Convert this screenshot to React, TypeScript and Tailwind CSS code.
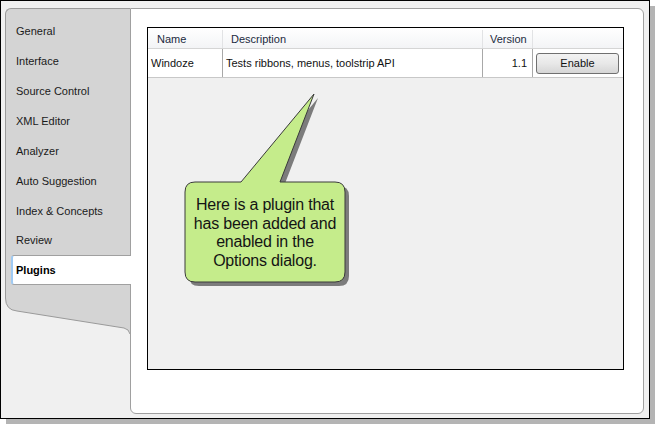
import React from "react";

const tabs = [
  { label: "General", h: "h-[30px]" },
  { label: "Interface", h: "h-[30px]" },
  { label: "Source Control", h: "h-[30px]" },
  { label: "XML Editor", h: "h-[30px]" },
  { label: "Analyzer", h: "h-[30px]" },
  { label: "Auto Suggestion", h: "h-[30px]" },
  { label: "Index & Concepts", h: "h-[30px]" },
  { label: "Review", h: "h-[29px]" },
];

function Callout() {
  // bubble drawn in local coords; svg origin sits at list (32, 62)
  const d =
    "M15 92 L61 92 L134 4 L100 92 L155 92 Q165 92 165 102 L165 182 Q165 192 155 192 L15 192 Q5 192 5 182 L5 102 Q5 92 15 92 Z";
  return (
    <>
      <svg
        className="absolute left-[32px] top-[62px]"
        width="180"
        height="205"
        viewBox="0 0 180 205"
      >
        <path d={d} transform="translate(4 4)" fill="#6f6f6f" opacity="0.9" />
        <path d={d} fill="#c5ec8b" stroke="#3a3a3a" strokeWidth="1" />
      </svg>
      <div className="absolute left-[37px] top-[168px] w-[160px] text-center text-[16px] leading-[18.5px] tracking-[-0.2px] text-[#141414]">
        Here is a plugin that
        <br />
        has been added and
        <br />
        enabled in the
        <br />
        Options dialog.
      </div>
    </>
  );
}

export default function App() {
  return (
    <div className="w-[655px] h-[424px] bg-white font-['Liberation_Sans',Arial,sans-serif] text-[11px] text-[#1a1a1a]">
      <div className="w-[650px] h-[419px] border border-black bg-[#f0f0f0] shadow-[6px_6px_0_#b4b4b4] flex pl-[4px] pr-[5px] pt-[7px] pb-[4px]">
        {/* left tab strip */}
        <div className="w-[125px] flex flex-col">
          <div className="bg-[#d4d4d4] border-l border-t border-[#9a9a9a] rounded-tl-[6px] pt-[7px]">
            {tabs.map((t) => (
              <div key={t.label} className={`${t.h} flex items-center pl-[10px]`}>
                {t.label}
              </div>
            ))}
            <div className="relative z-10 -mr-px ml-[5px] h-[30px] flex items-center bg-white border-y border-[#a0a0a0] border-l-2 border-l-[#9fcaf3] rounded-l-[3px] pl-[3px] font-bold text-black">
              Plugins
            </div>
          </div>
          <svg width="125" height="50" viewBox="0 0 125 50" className="block">
            <path
              d="M0 0 L0.5 0 L0.5 13 Q0.5 25 12 26 L119 43 Q124 44 125 49 L125 0 Z"
              fill="#d4d4d4"
            />
            <path
              d="M0.5 0 L0.5 13 Q0.5 25 12 26 L119 43 Q124 44 125 49"
              fill="none"
              stroke="#9a9a9a"
              strokeWidth="1"
            />
          </svg>
        </div>

        {/* right panel */}
        <div className="flex-1 bg-white border border-[#a0a0a0] rounded-[6px] rounded-tl-none pl-[16px] pr-[19px] pt-[18px]">
          <div className="relative h-[343px] border border-black bg-[#f0f0f0]">
            {/* header */}
            <div className="flex h-[21px] pt-[2px] bg-gradient-to-b from-white to-[#f3f4f6] border-b border-[#d5d5d5] text-[#1b2a40]">
              <div className="w-[75px] border-r border-[#e2e3e5] pl-[9px] flex items-center">Name</div>
              <div className="w-[260px] border-r border-[#e2e3e5] pl-[8px] flex items-center">Description</div>
              <div className="w-[50px] border-r border-[#e2e3e5] pl-[7px] flex items-center">Version</div>
              <div className="flex-1" />
            </div>
            {/* row */}
            <div className="flex h-[29px] bg-white border-b border-[#c8c8c8] text-[#111]">
              <div className="w-[75px] border-r border-[#a8a8a8] pl-[3px] flex items-center">Windoze</div>
              <div className="w-[260px] border-r border-[#a8a8a8] pl-[3px] flex items-center">
                Tests ribbons, menus, toolstrip API
              </div>
              <div className="w-[50px] border-r border-[#a8a8a8] pr-[5px] flex items-center justify-end">1.1</div>
              <div className="flex-1 flex items-center pl-[3px]">
                <button className="w-[83px] h-[21px] rounded-[3px] border border-[#707070] bg-gradient-to-b from-[#f3f3f3] via-[#e8e8e8] to-[#d6d6d6] text-[11px] text-[#111] flex items-center justify-center">
                  Enable
                </button>
              </div>
            </div>
            <Callout />
          </div>
        </div>
      </div>
    </div>
  );
}
